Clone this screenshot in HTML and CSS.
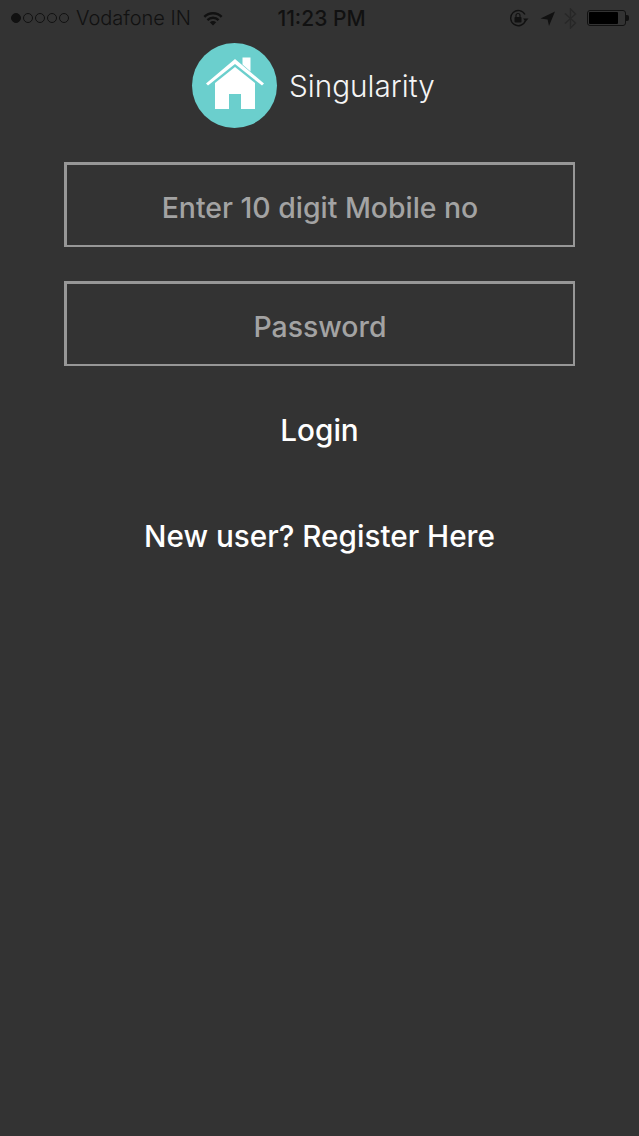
FILE: index.html
```html
<!DOCTYPE html>
<html lang="en">
<head>
  <meta charset="UTF-8" />
  <meta name="viewport" content="width=device-width, initial-scale=1.0"/>
  <title>Singularity</title>
  <link rel="stylesheet" href="styles.css">
</head>
<body>
  <div class="status">
    <div class="status-left">
      <span class="signal">
        <i class="dot full"></i><i class="dot"></i><i class="dot"></i><i class="dot"></i><i class="dot"></i>
      </span>
      <span class="carrier">Vodafone IN</span>
      <svg class="wifi" width="20" height="15" viewBox="0 0 20 15">
        <path d="M0.5 5 A13.5 13.5 0 0 1 19.5 5 L17.8 6.8 A11 11 0 0 0 2.2 6.8 Z" fill="#111"/>
        <path d="M3.6 8.2 A9 9 0 0 1 16.4 8.2 L14.7 10 A6.5 6.5 0 0 0 5.3 10 Z" fill="#111"/>
        <path d="M6.8 11.3 A4.5 4.5 0 0 1 13.2 11.3 L10 14.6 Z" fill="#111"/>
      </svg>
    </div>
    <div class="time">11:23 PM</div>
    <div class="status-right">
      <svg width="20" height="18" viewBox="0 0 20 18">
        <path d="M16.5 11.5 A7.6 7.6 0 1 1 16 5.5" fill="none" stroke="#111" stroke-width="1.4"/>
        <path d="M14 9.5 L19.5 9.5 L16.7 12.8 Z" fill="#111"/>
        <rect x="5.5" y="8" width="7" height="5.5" rx="0.8" fill="#111"/>
        <path d="M7 8 V6.5 A2 2 0 0 1 11 6.5 V8" fill="none" stroke="#111" stroke-width="1.2"/>
      </svg>
      <svg class="arrow" width="15" height="15" viewBox="0 0 15 15">
        <path d="M0.5 7.5 L15 0.5 L9 15 L7.6 8.6 Z" fill="#111"/>
      </svg>
      <svg class="bt" width="13" height="21" viewBox="0 0 13 21">
        <path d="M1 5.5 L11.5 15 L6.5 20 V1 L11.5 6 L1 15.5" fill="none" stroke="#222" stroke-width="1.3"/>
      </svg>
      <span class="battery"><span class="battery-level"></span></span>
      <span class="battery-tip"></span>
    </div>
  </div>

  <div class="brand">
    <div class="logo">
      <svg width="60" height="54" viewBox="0 0 60 54">
        <path d="M1 27.5 L30 3 L59 27.5 L57 29.5 L30 8 L3 29.5 Z" fill="#fff"/>
        <path d="M37.5 1.5 H45.5 V15.5 L37.5 8.5 Z" fill="#fff"/>
        <path d="M30 11 L50 27 V53 H36 V38 H24 V53 H10 V27 Z" fill="#fff"/>
      </svg>
    </div>
    <span class="brand-name">Singularity</span>
  </div>

  <form class="login">
    <div class="field">Enter 10 digit Mobile no</div>
    <div class="field">Password</div>
    <div class="link login-link">Login</div>
    <div class="link register-link">New user? Register Here</div>
  </form>
</body>
</html>
```

FILE: styles.css
```css
body {
  margin: 0;
  width: 639px;
  height: 1136px;
  overflow: hidden;
  background: #333333;
  font-family: Inter, "Liberation Sans", sans-serif;
  color: #fff;
}

.status {
  height: 36px;
  padding: 0 10px 0 11px;
  display: flex;
  align-items: center;
  justify-content: space-between;
  color: #111;
}
.status-left { display: flex; align-items: center; width: 240px; }
.signal { display: flex; gap: 2px; }
.dot {
  width: 10px;
  height: 10px;
  box-sizing: border-box;
  border: 1px solid #111;
  border-radius: 50%;
}
.dot.full { background: #111; }
.carrier { margin-left: 7px; font-size: 20px; font-weight: 300; }
.wifi { margin-left: 12px; }
.time { font-size: 21px; font-weight: 500; margin-left: 3px; }
.status-right {
  width: 240px;
  display: flex;
  align-items: center;
  justify-content: flex-end;
}
.arrow { margin-left: 11px; }
.bt { margin-left: 9px; opacity: 0.7; }
.battery {
  margin-left: 10px;
  width: 39px;
  height: 16px;
  box-sizing: border-box;
  border: 1px solid #111;
  border-radius: 3px;
  padding: 1px;
  display: flex;
}
.battery-level { width: 29px; background: #000; border-radius: 1px; }
.battery-tip { width: 3px; height: 6px; background: #111; border-radius: 0 2px 2px 0; }

.brand {
  margin-top: 7px;
  padding-left: 192px;
  display: flex;
  align-items: center;
}
.logo {
  width: 85px;
  height: 85px;
  border-radius: 50%;
  background: #6bcfcd;
  display: flex;
  align-items: center;
  justify-content: center;
  padding-bottom: 5px;
  box-sizing: border-box;
}
.brand-name { margin-left: 12px; font-size: 29.7px; font-weight: 300; color: #f5f5f5; }

.login {
  margin: 34px 64px 0 64px;
  display: flex;
  flex-direction: column;
  align-items: center;
}
.field {
  width: 100%;
  height: 85px;
  padding-top: 4px;
  box-sizing: border-box;
  border: solid #979797;
  border-width: 3px 2px 2px 3px;
  display: flex;
  align-items: center;
  justify-content: center;
  font-size: 28.4px;
  font-weight: 500;
  color: #a3a3a3;
  margin-bottom: 34px;
}
.link { font-size: 29.7px; font-weight: 500; color: #fff; }
.login-link { margin-top: 12px; }
.register-link { margin-top: 70px; }
```
